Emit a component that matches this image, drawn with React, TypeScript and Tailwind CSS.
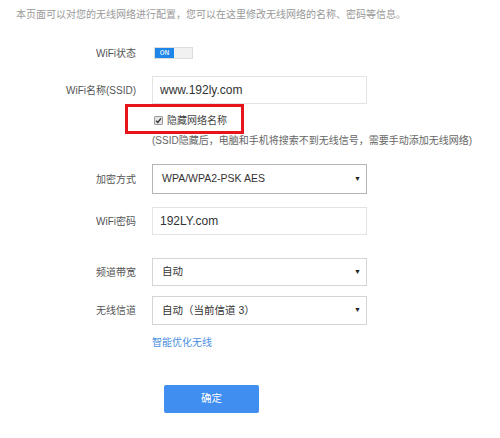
const font = { fontFamily: '"Liberation Sans", "Noto Sans CJK SC", sans-serif' };

function Label({ children }: { children: React.ReactNode }) {
  return (
    <div className="w-[137px] shrink-0 pr-[1px] text-right text-[10px] text-[#555]">{children}</div>
  );
}

function Select({ value, dark = true }: { value: string; dark?: boolean }) {
  return (
    <div
      className={`flex h-full w-[215px] items-center justify-between border bg-white pl-[9px] pr-[5px] text-[10.5px] text-[#333] ${
        dark ? 'border-[#b5b5b5]' : 'border-[#d5d5d5]'
      }`}
    >
      <span>{value}</span>
      <span className="text-[7px] text-[#222]">▼</span>
    </div>
  );
}

function TextInput({ value }: { value: string }) {
  return (
    <div className="flex h-full w-[215px] items-center border border-[#e3e3e3] bg-white pl-[7px] text-[12px] text-[#333]">
      {value}
    </div>
  );
}

export default function App() {
  return (
    <div className="h-[438px] w-[500px] overflow-hidden bg-white" style={font}>
      <p className="mt-[8px] pl-[16px] text-[10px] leading-[14px] text-[#999]">
        本页面可以对您的无线网络进行配置，您可以在这里修改无线网络的名称、密码等信息。
      </p>

      <div className="mt-[25px] flex h-[12px] items-center gap-[17px]">
        <Label>WiFi状态</Label>
        <div className="flex h-[12px] w-[39px] border border-[#ddd]">
          <div className="flex w-[19px] items-center justify-center bg-[#1e86e8] text-[8px] text-white" style={{ fontFamily: '"Liberation Mono", monospace' }}>
            ON
          </div>
          <div className="flex-1 bg-[#f1f1f1]" />
        </div>
      </div>

      <div className="mt-[17px] flex h-[28px] items-center gap-[15px]">
        <Label>WiFi名称(SSID)</Label>
        <TextInput value="www.192ly.com" />
      </div>

      <div className="relative flex h-[29px] items-center gap-[15px]">
        <div className="absolute left-[125px] top-0 h-[30px] w-[119px] border-[3px] border-[#e8141b]" />
        <Label>{''}</Label>
        <div className="flex items-center gap-[4px] pl-[2px] pt-[3px]">
          <div className="flex h-[9px] w-[9px] items-center justify-center rounded-[1px] border border-[#999] bg-[#e6e6e6]">
            <svg width="7" height="7" viewBox="0 0 10 10">
              <path d="M1.5 5.2 L4 7.8 L8.6 2" fill="none" stroke="#333" strokeWidth="2" />
            </svg>
          </div>
          <span className="text-[10px] text-[#444]">隐藏网络名称</span>
        </div>
      </div>

      <div className="mt-[1px] flex h-[14px] items-center gap-[15px] text-[10px] leading-[14px] text-[#666]">
        <Label>{''}</Label>
        <span className="whitespace-nowrap">(SSID隐藏后，电脑和手机将搜索不到无线信号，需要手动添加无线网络)</span>
      </div>

      <div className="mt-[16px] flex h-[30px] items-center gap-[15px]">
        <Label>加密方式</Label>
        <Select value="WPA/WPA2-PSK AES" />
      </div>

      <div className="mt-[13px] flex h-[28px] items-center gap-[15px]">
        <Label>WiFi密码</Label>
        <TextInput value="192LY.com" />
      </div>

      <div className="mt-[23px] flex h-[28px] items-center gap-[15px]">
        <Label>频道带宽</Label>
        <Select value="自动" dark={false} />
      </div>

      <div className="mt-[10px] flex h-[29px] items-center gap-[15px]">
        <Label>无线信道</Label>
        <Select value="自动（当前信道 3）" dark={false} />
      </div>

      <div className="mt-[10px] flex h-[14px] items-center gap-[15px]">
        <Label>{''}</Label>
        <span className="text-[10px] text-[#4a8fe0]">智能优化无线</span>
      </div>

      <div className="ml-[164px] mt-[36px] flex h-[28px] w-[95px] items-center justify-center rounded-[2px] bg-[#3f8ef0] text-[10.5px] text-white">
        确定
      </div>
    </div>
  );
}
